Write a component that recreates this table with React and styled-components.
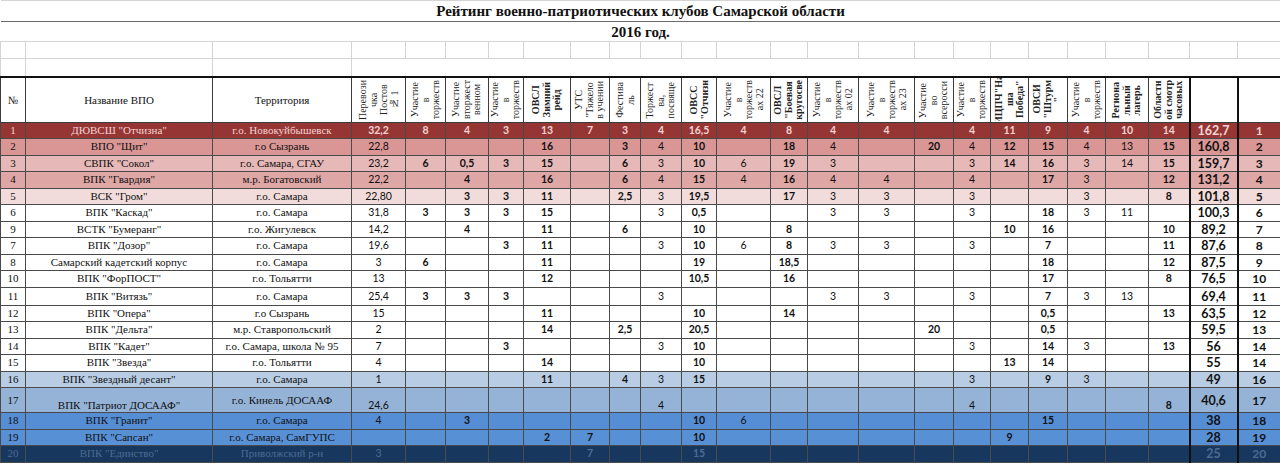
import React from 'react';
import styled, { createGlobalStyle } from 'styled-components';

const GlobalStyle = createGlobalStyle`
  body {
    margin: 0;
    background: #fff;
  }
`;

const widths = [25, 187, 139, 54, 40, 43, 35, 47, 39, 31, 41, 35, 54, 37, 51, 56, 39, 37, 38, 39, 38, 43, 41, 48, 43];

const tones = {
  r1: { bg: '#963634', fg: '#f4d3d2' },
  r2: { bg: '#da9694', fg: '#111' },
  r3: { bg: '#e6b8b7', fg: '#111' },
  r4: { bg: '#dea6a5', fg: '#111' },
  r5: { bg: '#f2dcdb', fg: '#111' },
  w: { bg: '#fff', fg: '#111' },
  b1: { bg: '#b8cce4', fg: '#111' },
  b2: { bg: '#95b3d7', fg: '#111' },
  b3: { bg: '#558ed5', fg: '#111' },
  b4: { bg: '#5890d6', fg: '#111' },
  b5: { bg: '#17375e', fg: '#4d6c93' },
};

// какие столбцы с баллами жирным
const boldCols = [1, 2, 3, 4, 5, 6, 8, 10, 13, 15, 16, 19];

const headers = [
  { lines: ['Перевози', 'чка', 'Постов', '№ 1'] },
  { lines: ['Участие', 'в', 'торжеств'] },
  { lines: ['Участие', 'вторжест', 'венном'] },
  { lines: ['Участие', 'в', 'торжеств'] },
  { lines: ['ОВСЛ', 'Зимний', 'рейд'], bold: true },
  { lines: ['УТС', '"Тяжело', 'в учении'] },
  { lines: ['Фестива', 'ль'] },
  { lines: ['Торжест', 'ва,', 'посвяще'] },
  { lines: ['ОВСС', '"Отчизн'], bold: true },
  { lines: ['Участие', 'в', 'торжеств', 'ах 22'] },
  { lines: ['ОВСЛ', '"Боевая', 'кругосве'], bold: true },
  { lines: ['Участие', 'в', 'торжеств', 'ах 02'] },
  { lines: ['Участие', 'в', 'торжеств', 'ах 23'] },
  { lines: ['Участие', 'во', 'всеросси'] },
  { lines: ['Участие', 'в', 'торжеств'] },
  { lines: ['ИЦПЧ"На', 'ша', 'Победа"'], bold: true },
  { lines: ['ОВСИ', '"Штурм', '"'], bold: true },
  { lines: ['Участие', 'в', 'торжеств'] },
  { lines: ['Региона', 'льный', 'лагерь'], bold: true },
  { lines: ['Областн', 'ой смотр', 'часовых'], bold: true },
];

const rows = [
  { n: '1', name: 'ДЮВСШ "Отчизна"', ter: 'г.о. Новокуйбышевск', tone: 'r1', v: ['32,2', '8', '4', '3', '13', '7', '3', '4', '16,5', '4', '8', '4', '4', '', '4', '11', '9', '4', '10', '14'], total: '162,7', rank: '1' },
  { n: '2', name: 'ВПО "Щит"', ter: 'г.о Сызрань', tone: 'r2', v: ['22,8', '', '', '', '16', '', '3', '4', '10', '', '18', '4', '', '20', '4', '12', '15', '4', '13', '15'], total: '160,8', rank: '2' },
  { n: '3', name: 'СВПК "Сокол"', ter: 'г.о. Самара, СГАУ', tone: 'r3', v: ['23,2', '6', '0,5', '3', '15', '', '6', '3', '10', '6', '19', '3', '', '', '3', '14', '16', '3', '14', '15'], total: '159,7', rank: '3' },
  { n: '4', name: 'ВПК "Гвардия"', ter: 'м.р. Богатовский', tone: 'r4', v: ['22,2', '', '4', '', '16', '', '6', '4', '15', '4', '16', '4', '4', '', '4', '', '17', '3', '', '12'], total: '131,2', rank: '4' },
  { n: '5', name: 'ВСК "Гром"', ter: 'г.о. Самара', tone: 'r5', v: ['22,80', '', '3', '3', '11', '', '2,5', '3', '19,5', '', '17', '3', '3', '', '3', '', '', '3', '', '8'], total: '101,8', rank: '5' },
  { n: '6', name: 'ВПК "Каскад"', ter: 'г.о. Самара', tone: 'w', v: ['31,8', '3', '3', '3', '15', '', '', '3', '0,5', '', '', '3', '3', '', '3', '', '18', '3', '11', ''], total: '100,3', rank: '6' },
  { n: '9', name: 'ВСТК "Бумеранг"', ter: 'г.о. Жигулевск', tone: 'w', v: ['14,2', '', '4', '', '11', '', '6', '', '10', '', '8', '', '', '', '', '10', '16', '', '', '10'], total: '89,2', rank: '7' },
  { n: '7', name: 'ВПК "Дозор"', ter: 'г.о. Самара', tone: 'w', v: ['19,6', '', '', '3', '11', '', '', '3', '10', '6', '8', '3', '3', '', '3', '', '7', '', '', '11'], total: '87,6', rank: '8' },
  { n: '8', name: 'Самарский кадетский корпус', ter: 'г.о. Самара', tone: 'w', v: ['3', '6', '', '', '11', '', '', '', '19', '', '18,5', '', '', '', '', '', '18', '', '', '12'], total: '87,5', rank: '9' },
  { n: '10', name: 'ВПК "ФорПОСТ"', ter: 'г.о. Тольятти', tone: 'w', v: ['13', '', '', '', '12', '', '', '', '10,5', '', '16', '', '', '', '', '', '17', '', '', '8'], total: '76,5', rank: '10' },
  { n: '11', name: 'ВПК "Витязь"', ter: 'г.о. Самара', tone: 'w', h: 18, v: ['25,4', '3', '3', '3', '', '', '', '3', '', '', '', '3', '3', '', '3', '', '7', '3', '13', ''], total: '69,4', rank: '11' },
  { n: '12', name: 'ВПК "Опера"', ter: 'г.о Сызрань', tone: 'w', v: ['15', '', '', '', '11', '', '', '', '10', '', '14', '', '', '', '', '', '0,5', '', '', '13'], total: '63,5', rank: '12' },
  { n: '13', name: 'ВПК "Дельта"', ter: 'м.р. Ставропольский', tone: 'w', v: ['2', '', '', '', '14', '', '2,5', '', '20,5', '', '', '', '', '20', '', '', '0,5', '', '', ''], total: '59,5', rank: '13' },
  { n: '14', name: 'ВПК "Кадет"', ter: 'г.о. Самара, школа № 95', tone: 'w', v: ['7', '', '', '3', '', '', '', '3', '10', '', '', '', '', '', '3', '', '14', '3', '', '13'], total: '56', rank: '14' },
  { n: '15', name: 'ВПК "Звезда"', ter: 'г.о. Тольятти', tone: 'w', v: ['4', '', '', '', '14', '', '', '', '10', '', '', '', '', '', '', '13', '14', '', '', ''], total: '55', rank: '14' },
  { n: '16', name: 'ВПК "Звездный десант"', ter: 'г.о. Самара', tone: 'b1', v: ['1', '', '', '', '11', '', '4', '3', '15', '', '', '', '', '', '3', '', '9', '3', '', ''], total: '49', rank: '16' },
  { n: '17', name: 'ВПК "Патриот ДОСААФ"', ter: 'г.о. Кинель ДОСААФ', tone: 'b2', h: 25, tall: true, v: ['24,6', '', '', '', '', '', '', '4', '', '', '', '', '', '', '4', '', '', '', '', '8'], total: '40,6', rank: '17' },
  { n: '18', name: 'ВПК "Гранит"', ter: 'г.о. Самара', tone: 'b3', v: ['4', '', '3', '', '', '', '', '', '10', '6', '', '', '', '', '', '', '15', '', '', ''], total: '38', rank: '18' },
  { n: '19', name: 'ВПК "Сапсан"', ter: 'г.о. Самара, СамГУПС', tone: 'b4', v: ['', '', '', '', '2', '7', '', '', '10', '', '', '', '', '', '', '9', '', '', '', ''], total: '28', rank: '19' },
  { n: '20', name: 'ВПК "Единство"', ter: 'Приволжский р-н', tone: 'b5', v: ['3', '', '', '', '', '7', '', '', '15', '', '', '', '', '', '', '', '', '', '', ''], total: '25', rank: '20' },
];

const Sheet = styled.table`
  width: 1280px;
  border-collapse: collapse;
  table-layout: fixed;
`;

const Col = styled.col`
  width: ${p => p.$w}px;
`;

const BannerCell = styled.td`
  height: ${p => p.$h}px;
  padding: 0;
  text-align: center;
  vertical-align: middle;
  font-family: "Liberation Serif", serif;
  font-weight: bold;
  font-size: 15px;
  line-height: 16px;
  color: #111;
  border-top: 1px solid #d4d4d4;
  border-bottom: 1px solid ${p => p.$line};
`;

const GridCell = styled.td`
  height: ${p => p.$h}px;
  padding: 0;
  border: 1px solid #d4d4d4;
  border-bottom: none;
`;

const HeadRow = styled.tr`
  height: 45px;
`;

const HeadCell = styled.th`
  padding: 0;
  border: 1px solid #3c3c3c;
  border-top: 2px solid #111;
  border-left-width: ${p => (p.$thick ? 2 : 1)}px;
  border-left-color: ${p => (p.$thick ? '#111' : '#3c3c3c')};
  font-family: "Liberation Serif", serif;
  font-weight: normal;
  font-size: 11px;
  color: #111;
  text-align: center;
  vertical-align: middle;
  overflow: hidden;
`;

const VerticalLabel = styled.div`
  height: 43px;
  display: flex;
  justify-content: center;
  align-items: center;
  overflow: hidden;
`;

const RotatedText = styled.span`
  writing-mode: vertical-rl;
  transform: rotate(180deg);
  white-space: nowrap;
  text-align: center;
  font-family: "Liberation Serif", serif;
  font-size: 10px;
  line-height: 10.5px;
  font-weight: ${p => (p.$bold ? 'bold' : 'normal')};
  color: #222;
`;

const DataRow = styled.tr`
  height: ${p => p.$h}px;
  background: ${p => tones[p.$tone].bg};
  color: ${p => tones[p.$tone].fg};
`;

const TextCell = styled.td`
  padding: 0 2px;
  border: 1px solid #4a4a4a;
  font-family: "Liberation Serif", serif;
  font-size: 11px;
  line-height: 13px;
  text-align: center;
  vertical-align: ${p => p.$valign || 'middle'};
  white-space: nowrap;
  overflow: hidden;
`;

const NumCell = styled.td`
  padding: 0;
  border: 1px solid #4a4a4a;
  border-left-width: ${p => (p.$thick ? 2 : 1)}px;
  border-left-color: ${p => (p.$thick ? '#111' : '#4a4a4a')};
  font-family: Lato, "Liberation Sans", sans-serif;
  font-size: ${p => p.$size || 10.5}px;
  line-height: 13px;
  font-weight: ${p => (p.$bold ? 'bold' : 'normal')};
  text-align: center;
  vertical-align: ${p => p.$valign || 'middle'};
  white-space: nowrap;
  overflow: hidden;
`;

const App = () => {
  return (
    <>
      <GlobalStyle />
      <Sheet>
        <colgroup>
          {widths.map((w, i) => (
            <Col key={i} $w={w} />
          ))}
        </colgroup>
        <tbody>
          <tr>
            <BannerCell colSpan={25} $h={20} $line="#6a6a6a">
              Рейтинг военно-патриотических клубов Самарской области
            </BannerCell>
          </tr>
          <tr>
            <BannerCell colSpan={25} $h={19} $line="#d4d4d4">
              2016 год.
            </BannerCell>
          </tr>
          <tr>
            {widths.map((w, i) => (
              <GridCell key={i} $h={16} />
            ))}
          </tr>
          <tr>
            <GridCell $h={17} />
            <GridCell />
            <GridCell />
            <GridCell colSpan={22} />
          </tr>
          <HeadRow>
            <HeadCell>№</HeadCell>
            <HeadCell>Название ВПО</HeadCell>
            <HeadCell>Территория</HeadCell>
            {headers.map((h, i) => (
              <HeadCell key={i}>
                <VerticalLabel>
                  <RotatedText $bold={h.bold}>
                    {h.lines.map((l, j) => (
                      <React.Fragment key={j}>
                        {j > 0 && <br />}
                        {l}
                      </React.Fragment>
                    ))}
                  </RotatedText>
                </VerticalLabel>
              </HeadCell>
            ))}
            <HeadCell $thick />
            <HeadCell $thick />
          </HeadRow>
          {rows.map(r => (
            <DataRow key={r.n + r.name} $tone={r.tone} $h={r.h || 16.5}>
              <TextCell>{r.n}</TextCell>
              <TextCell $valign={r.tall ? 'bottom' : 'middle'}>{r.name}</TextCell>
              <TextCell>{r.ter}</TextCell>
              {r.v.map((val, i) => (
                <NumCell
                  key={i}
                  $bold={r.tone === 'r1' || boldCols.includes(i)}
                  $valign={r.tall ? 'bottom' : 'middle'}
                >
                  {val}
                </NumCell>
              ))}
              <NumCell $thick $bold $size={12.5}>
                {r.total}
              </NumCell>
              <NumCell $thick $bold $size={12}>
                {r.rank}
              </NumCell>
            </DataRow>
          ))}
        </tbody>
      </Sheet>
    </>
  );
};

export default App;
